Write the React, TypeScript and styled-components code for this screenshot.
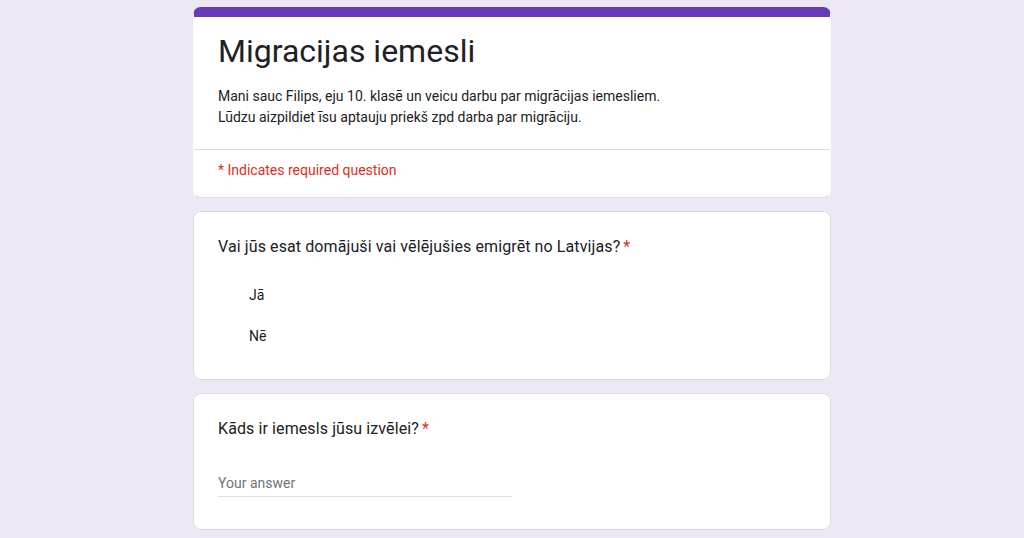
import styled, { createGlobalStyle } from "styled-components";

const GlobalStyle = createGlobalStyle`
  body {
    margin: 0;
    background: #ede7f6;
    font-family: Roboto, "Noto Sans", Arial, sans-serif;
    color: #202124;
  }
`;

const Page = styled.main`
  width: 638px;
  margin: 7px auto 0;
  display: flex;
  flex-direction: column;
  gap: 13px;
`;

const Card = styled.section<{ $accent?: boolean }>`
  background: #fff;
  border: 1px solid #dadce0;
  border-radius: 8px;
  overflow: hidden;
  ${(p) => p.$accent && `border-top: 10px solid #673ab7; border-left-color: #fff; border-right-color: #fff;`}
`;

const Header = styled.div`
  padding: 14px 24px 21px;
  border-bottom: 1px solid #dadce0;
`;

const Title = styled.h1`
  margin: 0 0 15px;
  font-size: 32px;
  line-height: 40px;
  font-weight: 400;
  letter-spacing: 0;
`;

const Description = styled.p`
  margin: 0;
  font-size: 14px;
  line-height: 21px;
`;

const Required = styled.div`
  padding: 10px 24px 17px;
  font-size: 14px;
  line-height: 20px;
  color: #d93025;
`;

const Question = styled.div<{ $bottom: number }>`
  padding: 23px 24px ${(p) => p.$bottom}px;
`;

const QuestionTitle = styled.h2`
  margin: 0;
  font-size: 16px;
  line-height: 24px;
  font-weight: 400;
  letter-spacing: 0.1px;
`;

const Star = styled.span`
  color: #d93025;
  margin-left: 3px;
`;

const Options = styled.div`
  margin-top: 26px;
  display: flex;
  flex-direction: column;
  gap: 21px;
  padding-left: 31px;
`;

const Option = styled.label`
  font-size: 14px;
  line-height: 20px;
`;

const Answer = styled.div`
  margin-top: 32px;
  width: 50%;
  padding-bottom: 3px;
  border-bottom: 1px solid #e0e0e0;
  font-size: 14px;
  line-height: 20px;
  color: #70757a;
`;

export default function App() {
  return (
    <>
      <GlobalStyle />
      <Page>
        <Card $accent>
          <Header>
            <Title>Migracijas iemesli</Title>
            <Description>
              Mani sauc Filips, eju 10. klasē un veicu darbu par migrācijas iemesliem.
              <br />
              Lūdzu aizpildiet īsu aptauju priekš zpd darba par migrāciju.
            </Description>
          </Header>
          <Required>* Indicates required question</Required>
        </Card>

        <Card>
          <Question $bottom={33}>
            <QuestionTitle>
              Vai jūs esat domājuši vai vēlējušies emigrēt no Latvijas?<Star>*</Star>
            </QuestionTitle>
            <Options>
              <Option>Jā</Option>
              <Option>Nē</Option>
            </Options>
          </Question>
        </Card>

        <Card>
          <Question $bottom={32}>
            <QuestionTitle>
              Kāds ir iemesls jūsu izvēlei?<Star>*</Star>
            </QuestionTitle>
            <Answer>Your answer</Answer>
          </Question>
        </Card>
      </Page>
    </>
  );
}
